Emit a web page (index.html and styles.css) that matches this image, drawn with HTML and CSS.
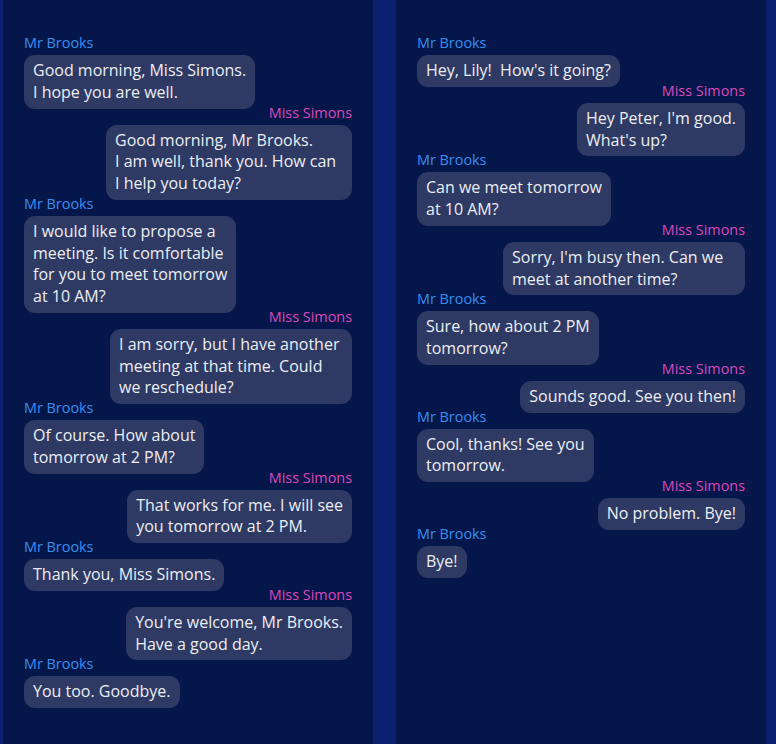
FILE: index.html
```html
<!DOCTYPE html>
<html lang="en">
<head>
<meta charset="utf-8">
<title>Conversations</title>
<link rel="stylesheet" href="styles.css">
</head>
<body>
<main class="board">
  <section class="chat">
    <div class="msg msg-left"><div class="who">Mr Brooks</div><div class="bubble">Good morning, Miss Simons.<br>I hope you are well.</div></div>
    <div class="msg msg-right"><div class="who">Miss Simons</div><div class="bubble bubble-wide">Good morning, Mr Brooks.<br>I am well, thank you. How can I help you today?</div></div>
    <div class="msg msg-left"><div class="who">Mr Brooks</div><div class="bubble">I would like to propose a<br>meeting. Is it comfortable<br>for you to meet tomorrow<br>at 10 AM?</div></div>
    <div class="msg msg-right"><div class="who">Miss Simons</div><div class="bubble">I am sorry, but I have another meeting at that time. Could we reschedule?</div></div>
    <div class="msg msg-left"><div class="who">Mr Brooks</div><div class="bubble">Of course. How about<br>tomorrow at 2 PM?</div></div>
    <div class="msg msg-right"><div class="who">Miss Simons</div><div class="bubble">That works for me. I will see<br>you tomorrow at 2 PM.</div></div>
    <div class="msg msg-left"><div class="who">Mr Brooks</div><div class="bubble">Thank you, Miss Simons.</div></div>
    <div class="msg msg-right"><div class="who">Miss Simons</div><div class="bubble">You're welcome, Mr Brooks.<br>Have a good day.</div></div>
    <div class="msg msg-left"><div class="who">Mr Brooks</div><div class="bubble">You too. Goodbye.</div></div>
  </section>
  <section class="chat">
    <div class="msg msg-left"><div class="who">Mr Brooks</div><div class="bubble">Hey, Lily!&nbsp; How's it going?</div></div>
    <div class="msg msg-right"><div class="who">Miss Simons</div><div class="bubble">Hey Peter, I'm good.<br>What's up?</div></div>
    <div class="msg msg-left"><div class="who">Mr Brooks</div><div class="bubble">Can we meet tomorrow<br>at 10 AM?</div></div>
    <div class="msg msg-right"><div class="who">Miss Simons</div><div class="bubble">Sorry, I'm busy then. Can we meet at another time?</div></div>
    <div class="msg msg-left"><div class="who">Mr Brooks</div><div class="bubble">Sure, how about 2 PM<br>tomorrow?</div></div>
    <div class="msg msg-right"><div class="who">Miss Simons</div><div class="bubble">Sounds good. See you then!</div></div>
    <div class="msg msg-left"><div class="who">Mr Brooks</div><div class="bubble">Cool, thanks! See you<br>tomorrow.</div></div>
    <div class="msg msg-right"><div class="who">Miss Simons</div><div class="bubble">No problem. Bye!</div></div>
    <div class="msg msg-left"><div class="who">Mr Brooks</div><div class="bubble">Bye!</div></div>
  </section>
</main>
</body>
</html>
```
FILE: styles.css
```css
html, body {
  margin: 0;
  height: 100%;
}

body {
  background: #0b2170;
  font-family: "Open Sans", "Noto Sans", sans-serif;
  overflow: hidden;
}

.board {
  display: flex;
  gap: 23px;
  padding-left: 3px;
  height: 100%;
}

.chat {
  box-sizing: border-box;
  width: 370px;
  height: 100%;
  background: #05164a;
  padding: 39px 21px 0;
  display: flex;
  flex-direction: column;
}

.msg {
  display: flex;
  flex-direction: column;
}

.msg-left {
  align-items: flex-start;
}

.msg-right {
  align-items: flex-end;
}

/* sender name sits a little above its line box */
.who {
  font-size: 14.4px;
  line-height: 14px;
  margin: -3px 0 5px;
}

.msg-left .who {
  color: #3a8eef;
}

.msg-right .who {
  color: #dc48bb;
}

.bubble {
  max-width: 242px;
  box-sizing: border-box;
  background: #2e3a63;
  color: #eceef4;
  font-size: 16px;
  line-height: 21.75px;
  padding: 5px 9px;
  border-radius: 11px;
}

.bubble-wide {
  max-width: 246px;
}
```
